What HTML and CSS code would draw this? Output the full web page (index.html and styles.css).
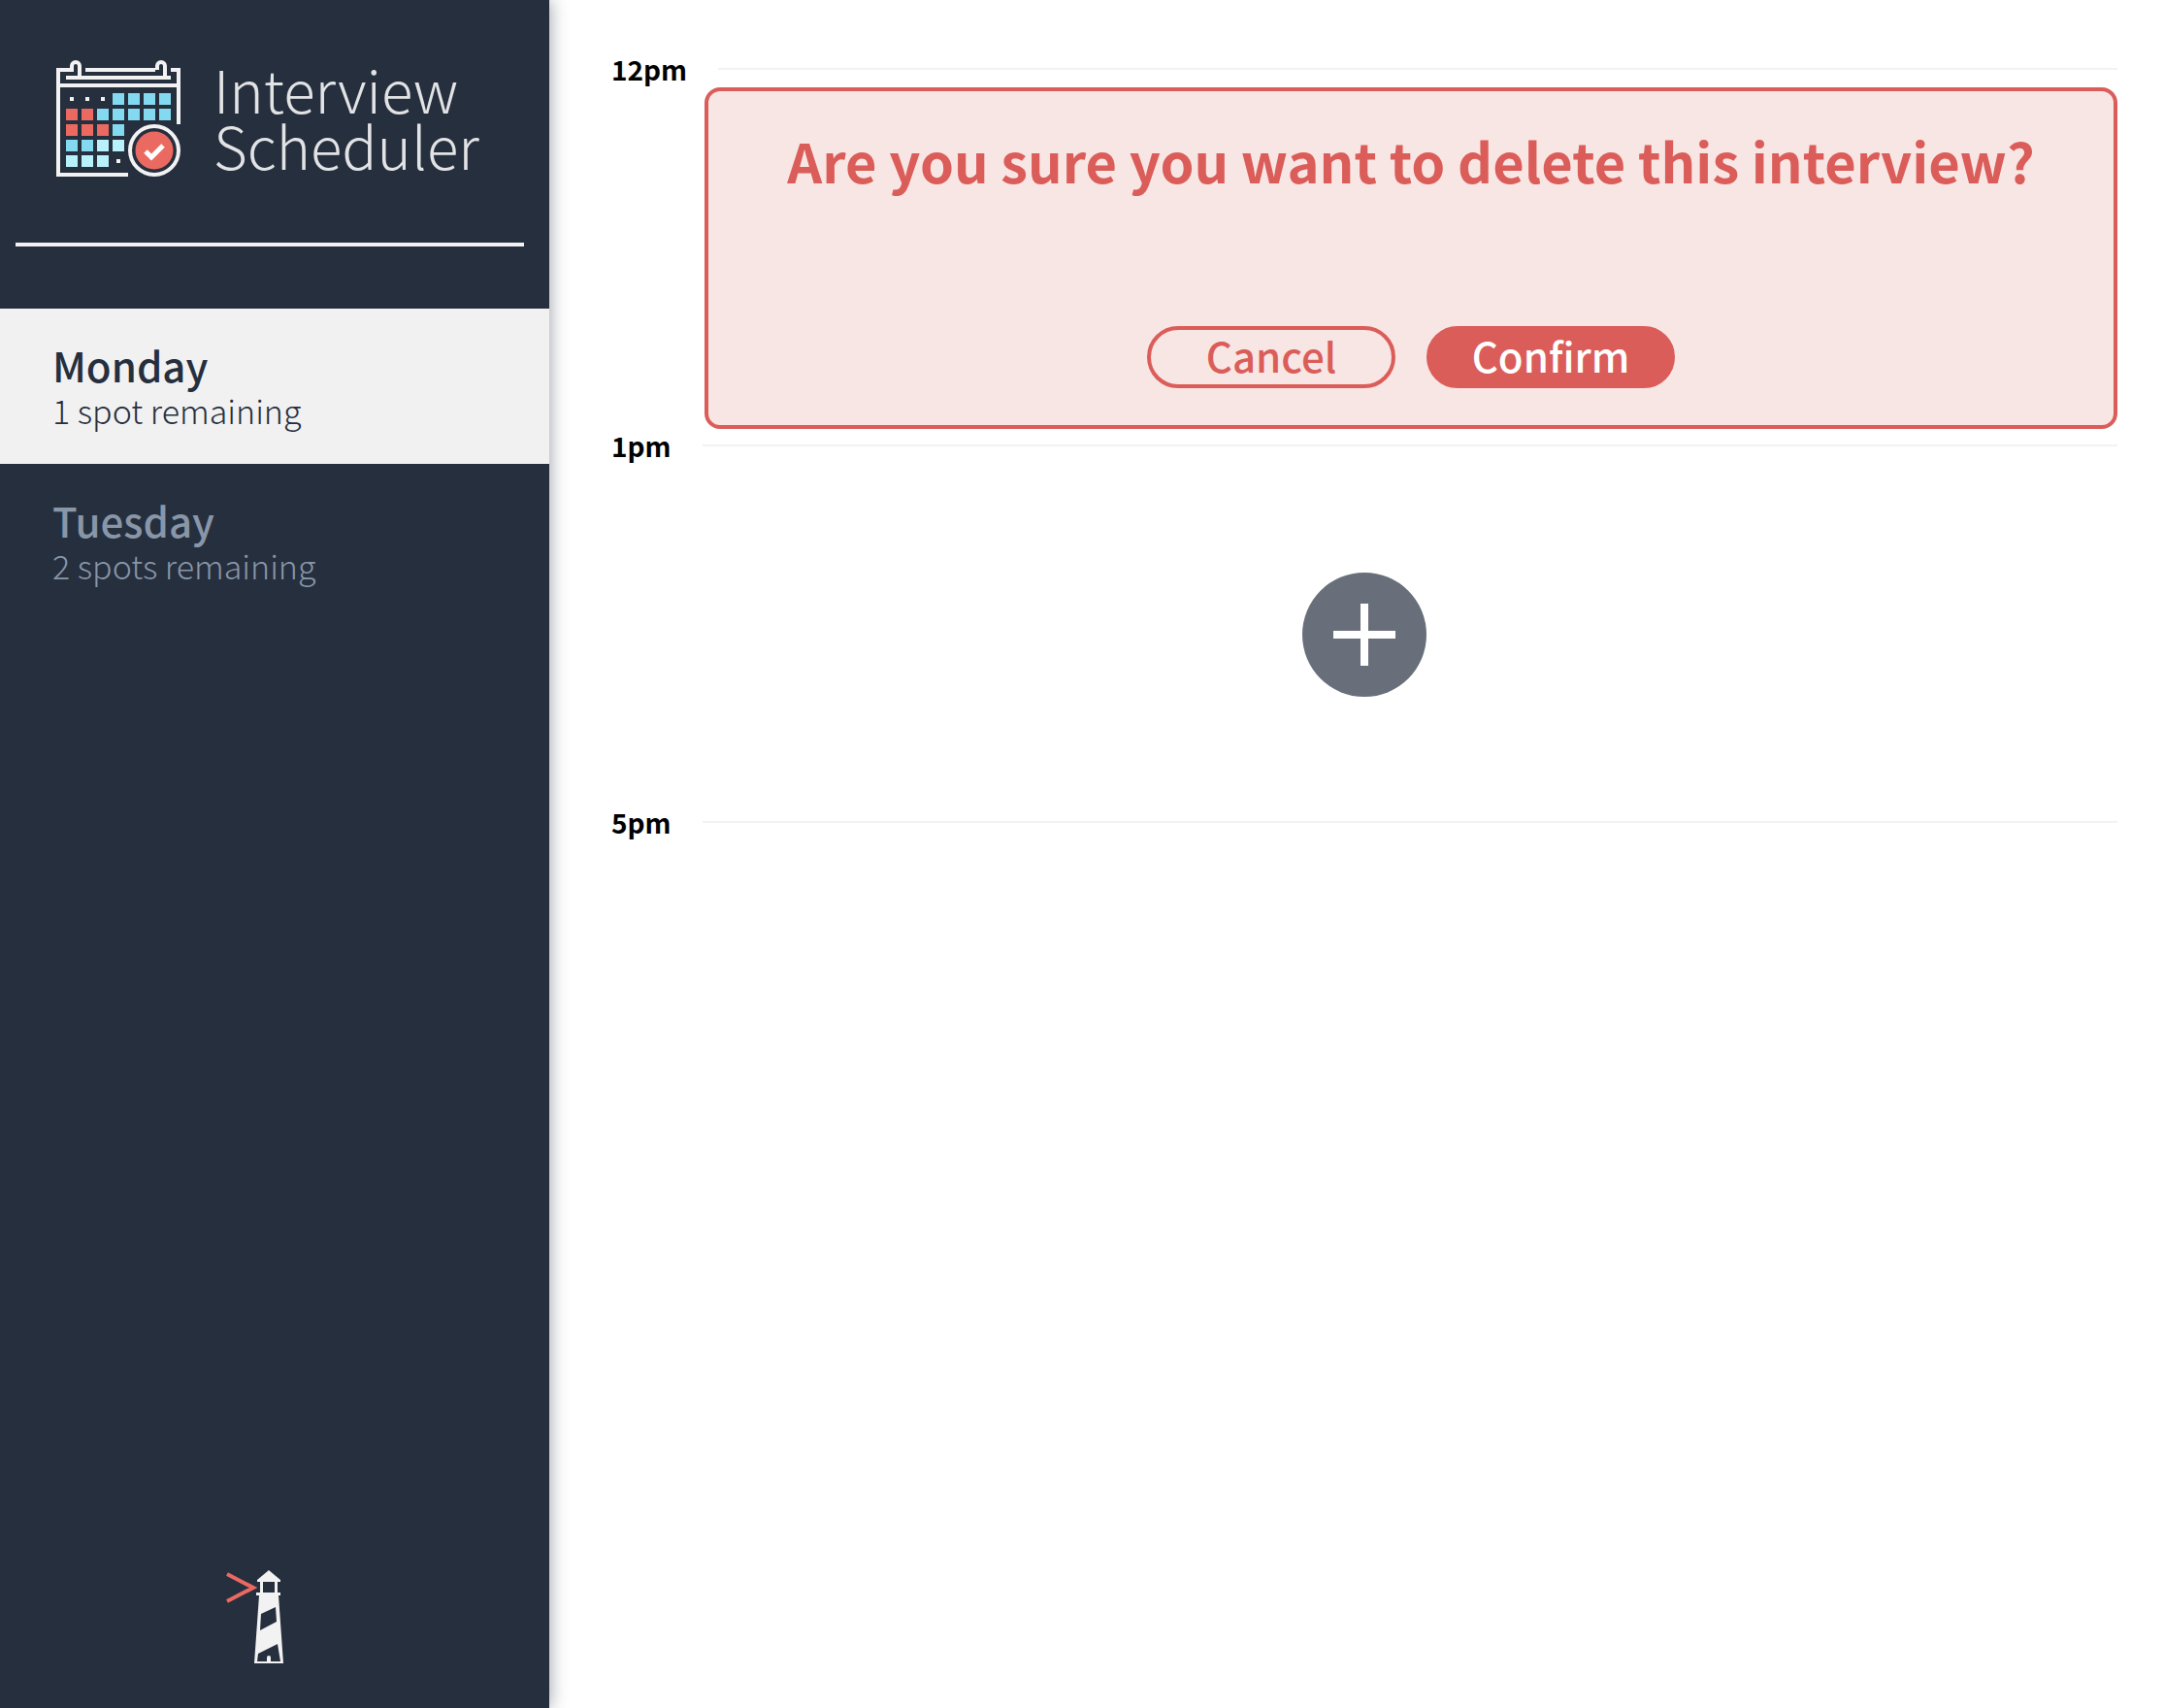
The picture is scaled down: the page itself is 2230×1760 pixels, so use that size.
FILE: index.html
```html
<!DOCTYPE html>
<html lang="en">
<head>
<meta charset="utf-8">
<title>Interview Scheduler</title>
<link rel="stylesheet" href="styles.css">
</head>
<body>
<div class="layout">
  <aside class="sidebar">
    <h1 class="brand">
      <svg class="brand-icon" viewBox="0 0 128 120" aria-hidden="true">
        <g fill="none" stroke="#f2f2f2" stroke-width="4">
          <path d="M18 10H2V118H74M30 10H102M118 10H126V66M2 26H126M10 18H118"/>
          <path d="M16 10V6a4 4 0 0 1 8 0V18M104 10V6a4 4 0 0 1 8 0V18"/>
          <circle cx="101" cy="93" r="25"/>
        </g>
        <path fill="#f2f2f2" d="M14 38h4v4h-4zM30 38h4v4h-4zM46 38h4v4h-4zM62 102h4v4h-4z"/>
        <path fill="#83daf0" d="M58 34h12v12H58zM74 34h12v12H74zM90 34h12v12H90zM106 34h12v12H106zM42 50h12v12H42zM58 50h12v12H58zM74 50h12v12H74zM90 50h12v12H90zM106 50h12v12H106zM58 66h12v12H58zM10 82h12v12H10zM26 82h12v12H26z"/>
        <path fill="#b9f1fa" d="M42 82h12v12H42zM58 82h12v12H58zM10 98h12v12H10zM26 98h12v12H26zM42 98h12v12H42z"/>
        <path fill="#ea6a61" d="M10 50h12v12H10zM26 50h12v12H26zM10 66h12v12H10zM26 66h12v12H26zM42 66h12v12H42z"/>
        <circle cx="101" cy="93" r="19.500" fill="#ea6a61"/>
        <path d="M92 94l6 6 12-12" fill="none" stroke="#fff" stroke-width="5"/>
      </svg>
      <span class="brand-name">Interview<br>Scheduler</span>
    </h1>
    <hr class="separator">
    <nav>
      <ul class="days">
        <li><a class="day day-selected" href="#monday" aria-current="page"><span class="day-name">Monday</span><span class="day-spots">1 spot remaining</span></a></li>
        <li><a class="day" href="#tuesday"><span class="day-name">Tuesday</span><span class="day-spots">2 spots remaining</span></a></li>
      </ul>
    </nav>
    <svg class="lighthouse" viewBox="0 0 92 96" aria-hidden="true">
      <path d="M2 4l27 14L2 32" fill="none" stroke="#ea6a61" stroke-width="4"/>
      <path fill="#f2f2f2" fill-rule="evenodd" d="M45 0L57 10V12H54V23H57V26H55L60 96H30L35 26H32V23H36V12H33V10ZM39 12V23H51V12ZM37 45L52 38L53 53L36 62ZM34 86L54 76L57 94H47V90a2 2 0 0 0-4 0V94H33Z"/>
    </svg>
  </aside>
  <main class="schedule">
    <section class="appointment">
      <header class="time"><h2 class="time-label">12pm</h2><hr class="time-line"></header>
      <div class="slot">
        <div class="card">
          <p class="card-message">Are you sure you want to delete this interview?</p>
          <div class="card-actions">
            <button class="button" type="button">Cancel</button>
            <button class="button button-solid" type="button">Confirm</button>
          </div>
        </div>
      </div>
    </section>
    <section class="appointment">
      <header class="time"><h2 class="time-label">1pm</h2><hr class="time-line"></header>
      <div class="slot">
        <button class="add" type="button" aria-label="Add">
          <svg viewBox="0 0 128 128" aria-hidden="true"><circle cx="64" cy="64" r="64" fill="#686f7a"/><path d="M32 64H96M64 32V96" stroke="#fff" stroke-width="8"/></svg>
        </button>
      </div>
    </section>
    <section class="appointment">
      <header class="time"><h2 class="time-label">5pm</h2><hr class="time-line"></header>
    </section>
  </main>
</div>
</body>
</html>
```
FILE: styles.css
```css
* {
  box-sizing: border-box;
  margin: 0;
}

body {
  background: #fff;
  color: #000;
  font-family: "Noto Sans CJK SC", "Noto Sans", sans-serif;
}

.layout {
  display: flex;
  min-height: 100vh;
}

.sidebar {
  display: flex;
  flex: 0 0 566px;
  flex-direction: column;
  background: #262f3e;
  box-shadow: 2px 0 16px rgba(38, 47, 62, 0.4);
}

.brand {
  display: flex;
  gap: 34px;
  padding: 62px 0 0 58px;
  height: 250px;
}

.brand-icon {
  flex: none;
  width: 128px;
  height: 120px;
}

.brand-name {
  color: #e2e3e5;
  font-size: 60px;
  font-weight: 300;
  line-height: 58px;
}

.separator {
  height: 4px;
  margin: 0 26px 64px 16px;
  border: 0;
  background: #f2f2f2;
}

.days {
  padding: 0;
  list-style: none;
}

.day {
  display: flex;
  flex-direction: column;
  justify-content: center;
  height: 160px;
  padding: 2px 54px 0;
  color: #8896a8;
  text-decoration: none;
}

.day-selected {
  background: #f1f1f1;
  color: #262f3e;
}

.day-name {
  font-size: 42px;
  font-weight: 500;
  line-height: 48px;
}

.day-spots {
  font-size: 34px;
  font-weight: 300;
  line-height: 46px;
}

.lighthouse {
  width: 92px;
  height: 96px;
  margin: auto auto 46px 232px;
}

.schedule {
  flex: 1;
  min-width: 0;
  padding: 55px 48px 48px 64px;
}

.time {
  display: flex;
  align-items: center;
  gap: 32px;
}

.time-label {
  font-size: 28px;
  font-weight: 700;
  line-height: 32px;
}

.time-line {
  flex: 1;
  height: 2px;
  border: 0;
  background: #f2f2f2;
}

.slot {
  display: flex;
  align-items: center;
  justify-content: center;
  min-height: 356px;
  padding: 3px 0 1px;
}

.card {
  display: flex;
  flex: 1;
  flex-direction: column;
  align-items: center;
  justify-content: space-between;
  min-height: 352px;
  margin-left: 96px;
  padding: 36px 32px 38px;
  border: 4px solid #db5d59;
  border-radius: 16px;
  background: #f8e6e4;
  color: #db5d59;
}

.card-message {
  font-size: 56px;
  font-weight: 700;
  line-height: 70px;
  text-align: center;
}

.card-actions {
  display: flex;
  gap: 32px;
}

.button {
  width: 256px;
  height: 64px;
  padding: 0 0 4px;
  border: 4px solid #db5d59;
  border-radius: 32px;
  background: transparent;
  color: #db5d59;
  font: 500 42px/52px "Noto Sans CJK SC", "Noto Sans", sans-serif;
}

.button-solid {
  background: #db5d59;
  color: #fff;
}

.add {
  width: 128px;
  height: 128px;
  padding: 0;
  border: 0;
  background: none;
}

.add svg {
  display: block;
}
```
